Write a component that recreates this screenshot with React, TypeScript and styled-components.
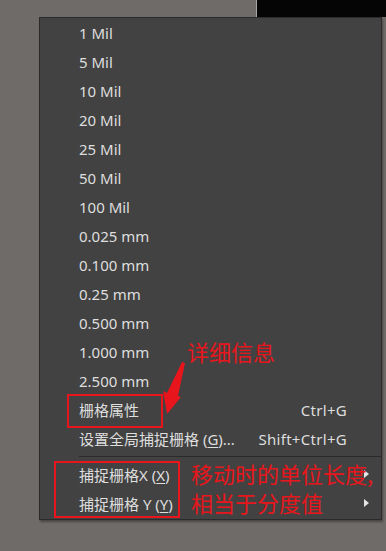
import styled, { createGlobalStyle } from "styled-components"

// 栅格菜单 + 红色标注

const GlobalStyle = createGlobalStyle`
  html, body {
    margin: 0;
    padding: 0;
    background: #6f6b69;
  }
  body {
    width: 386px;
    height: 551px;
    overflow: hidden;
  }
`

const Page = styled.div`
  position: relative;
  width: 386px;
  height: 551px;
  padding: 17px 0 0 39px;
  box-sizing: border-box;
  font-family: "Noto Sans", "Noto Sans CJK SC", sans-serif;
`

const DarkWindow = styled.div`
  //뒤 창
  position: absolute;
  top: 0;
  left: 256px;
  width: 130px;
  height: 17px;
  background: #050505;
  border-left: 1px solid #a8a4a2;
`

const Menu = styled.div`
  position: relative;
  width: 343px;
  background: #424242;
  border: 1px solid #2b2b2b;
  box-sizing: border-box;
  padding: 0 0 1px;
  box-shadow: 1px 2px 2px rgba(0, 0, 0, 0.35);
`

const Item = styled.div`
  height: 29px;
  display: flex;
  align-items: center;
  padding-left: 39px;
  padding-right: 34px;
  color: #dedede;
  font-size: 15px;
  position: relative;
`

const Label = styled.span`
  flex: 1;
  white-space: nowrap;
`

const Shortcut = styled.span`
  white-space: nowrap;
  letter-spacing: 0.3px;
`

const Key = styled.span`
  text-decoration: underline;
  text-underline-offset: 2px;
`

const Separator = styled.div`
  height: 7px;
  display: flex;
  align-items: center;
  padding-left: 39px;
  &::after {
    content: "";
    flex: 1;
    height: 1px;
    background: #2a2a2a;
  }
`

const SubArrow = styled.span`
  position: absolute;
  right: 12px;
  top: 10px;
  width: 0;
  height: 0;
  border-top: 4px solid transparent;
  border-bottom: 4px solid transparent;
  border-left: 5px solid #e6e6e6;
`

const RedBox = styled.div<{ $x: number; $y: number; $w: number; $h: number }>`
  position: absolute;
  left: ${(p) => p.$x}px;
  top: ${(p) => p.$y}px;
  width: ${(p) => p.$w}px;
  height: ${(p) => p.$h}px;
  border: 2px solid #e8161c;
  box-sizing: border-box;
`

const Note = styled.div<{ $x: number; $y: number }>`
  position: absolute;
  left: ${(p) => p.$x}px;
  top: ${(p) => p.$y}px;
  color: #e8161c;
  font-family: "Noto Sans CJK SC", sans-serif;
  font-size: 22px;
  line-height: 29px;
  white-space: nowrap;
`

const ArrowSvg = styled.svg`
  position: absolute;
  left: 158px;
  top: 358px;
`

const grids = [
  "1 Mil", "5 Mil", "10 Mil", "20 Mil", "25 Mil", "50 Mil", "100 Mil",
  "0.025 mm", "0.100 mm", "0.25 mm", "0.500 mm", "1.000 mm", "2.500 mm",
]

export default function App() {
  return (
    <>
      <GlobalStyle />
      <Page>
        <DarkWindow />
        <Menu>
          {grids.map((g) => (
            <Item key={g}><Label>{g}</Label></Item>
          ))}
          <Item>
            <Label>栅格属性</Label>
            <Shortcut>Ctrl+G</Shortcut>
          </Item>
          <Item>
            <Label>设置全局捕捉栅格 (<Key>G</Key>)...</Label>
            <Shortcut>Shift+Ctrl+G</Shortcut>
          </Item>
          <Separator />
          <Item>
            <Label>捕捉栅格X (<Key>X</Key>)</Label>
            <SubArrow />
          </Item>
          <Item>
            <Label>捕捉栅格 Y (<Key>Y</Key>)</Label>
            <SubArrow />
          </Item>
        </Menu>

        <RedBox $x={67} $y={394} $w={96} $h={34} />
        <RedBox $x={54} $y={461} $w={126} $h={57} />
        <Note $x={187} $y={337}>详细信息</Note>
        <Note $x={191} $y={459}>
          移动时的单位长度,<br />相当于分度值
        </Note>
        <ArrowSvg width="30" height="60" viewBox="0 0 30 60">
          <polygon
            points="24,4 27,5 20,38 23,39 9,56 5,33 9,35"
            fill="#e8161c"
          />
        </ArrowSvg>
      </Page>
    </>
  )
}
